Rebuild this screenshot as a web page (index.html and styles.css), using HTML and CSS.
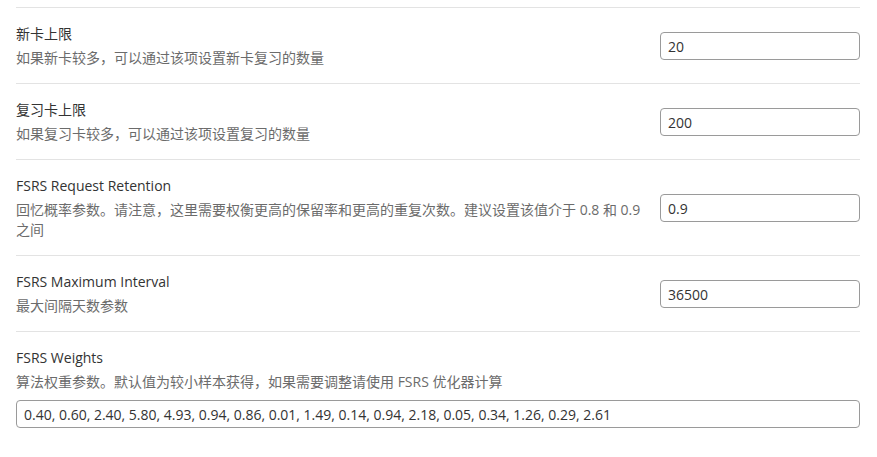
FILE: index.html
```html
<!DOCTYPE html>
<html lang="zh-CN">
<head>
<meta charset="utf-8">
<title>设置</title>
<link rel="stylesheet" href="styles.css">
</head>
<body>
<div class="settings">
  <div class="row">
    <div class="info">
      <div class="title">新卡上限</div>
      <div class="desc">如果新卡较多，可以通过该项设置新卡复习的数量</div>
    </div>
    <input class="field" type="text" value="20">
  </div>
  <div class="row">
    <div class="info">
      <div class="title">复习卡上限</div>
      <div class="desc">如果复习卡较多，可以通过该项设置复习的数量</div>
    </div>
    <input class="field" type="text" value="200">
  </div>
  <div class="row">
    <div class="info">
      <div class="title">FSRS Request Retention</div>
      <div class="desc">回忆概率参数。请注意，这里需要权衡更高的保留率和更高的重复次数。建议设置该值介于 0.8 和 0.9 之间</div>
    </div>
    <input class="field" type="text" value="0.9">
  </div>
  <div class="row">
    <div class="info">
      <div class="title">FSRS Maximum Interval</div>
      <div class="desc">最大间隔天数参数</div>
    </div>
    <input class="field" type="text" value="36500">
  </div>
  <div class="row stacked">
    <div class="info">
      <div class="title">FSRS Weights</div>
      <div class="desc">算法权重参数。默认值为较小样本获得，如果需要调整请使用 FSRS 优化器计算</div>
    </div>
    <input class="field wide" type="text" value="0.40, 0.60, 2.40, 5.80, 4.93, 0.94, 0.86, 0.01, 1.49, 0.14, 0.94, 2.18, 0.05, 0.34, 1.26, 0.29, 2.61">
  </div>
</div>
</body>
</html>
```

FILE: styles.css
```css
html, body {
  margin: 0;
  padding: 0;
  background: #ffffff;
}

body {
  font-family: "Open Sans", "Noto Sans CJK SC", sans-serif;
  font-size: 14px;
  color: #333333;
}

.settings {
  padding: 7px 17px 0 16px;
}

.row {
  display: flex;
  align-items: center;
  gap: 14px;
  border-top: 1px solid #e3e3e3;
  padding: 16px 0 15px;
}

.row.stacked {
  flex-direction: column;
  align-items: stretch;
  gap: 8px;
}

.info {
  flex: 1;
  min-width: 0;
  display: flex;
  flex-direction: column;
  gap: 4px;
}

.title {
  line-height: 20px;
  color: #333333;
}

.desc {
  line-height: 20px;
  color: #6b6b6b;
}

.field {
  width: 200px;
  height: 28px;
  box-sizing: border-box;
  flex: none;
  border: 1px solid #9a9a9a;
  border-radius: 4px;
  padding: 0 7px;
  font-family: "Open Sans", "Noto Sans CJK SC", sans-serif;
  font-size: 14px;
  color: #333333;
  background: #ffffff;
  outline: none;
}

.field.wide {
  width: 100%;
}
```
